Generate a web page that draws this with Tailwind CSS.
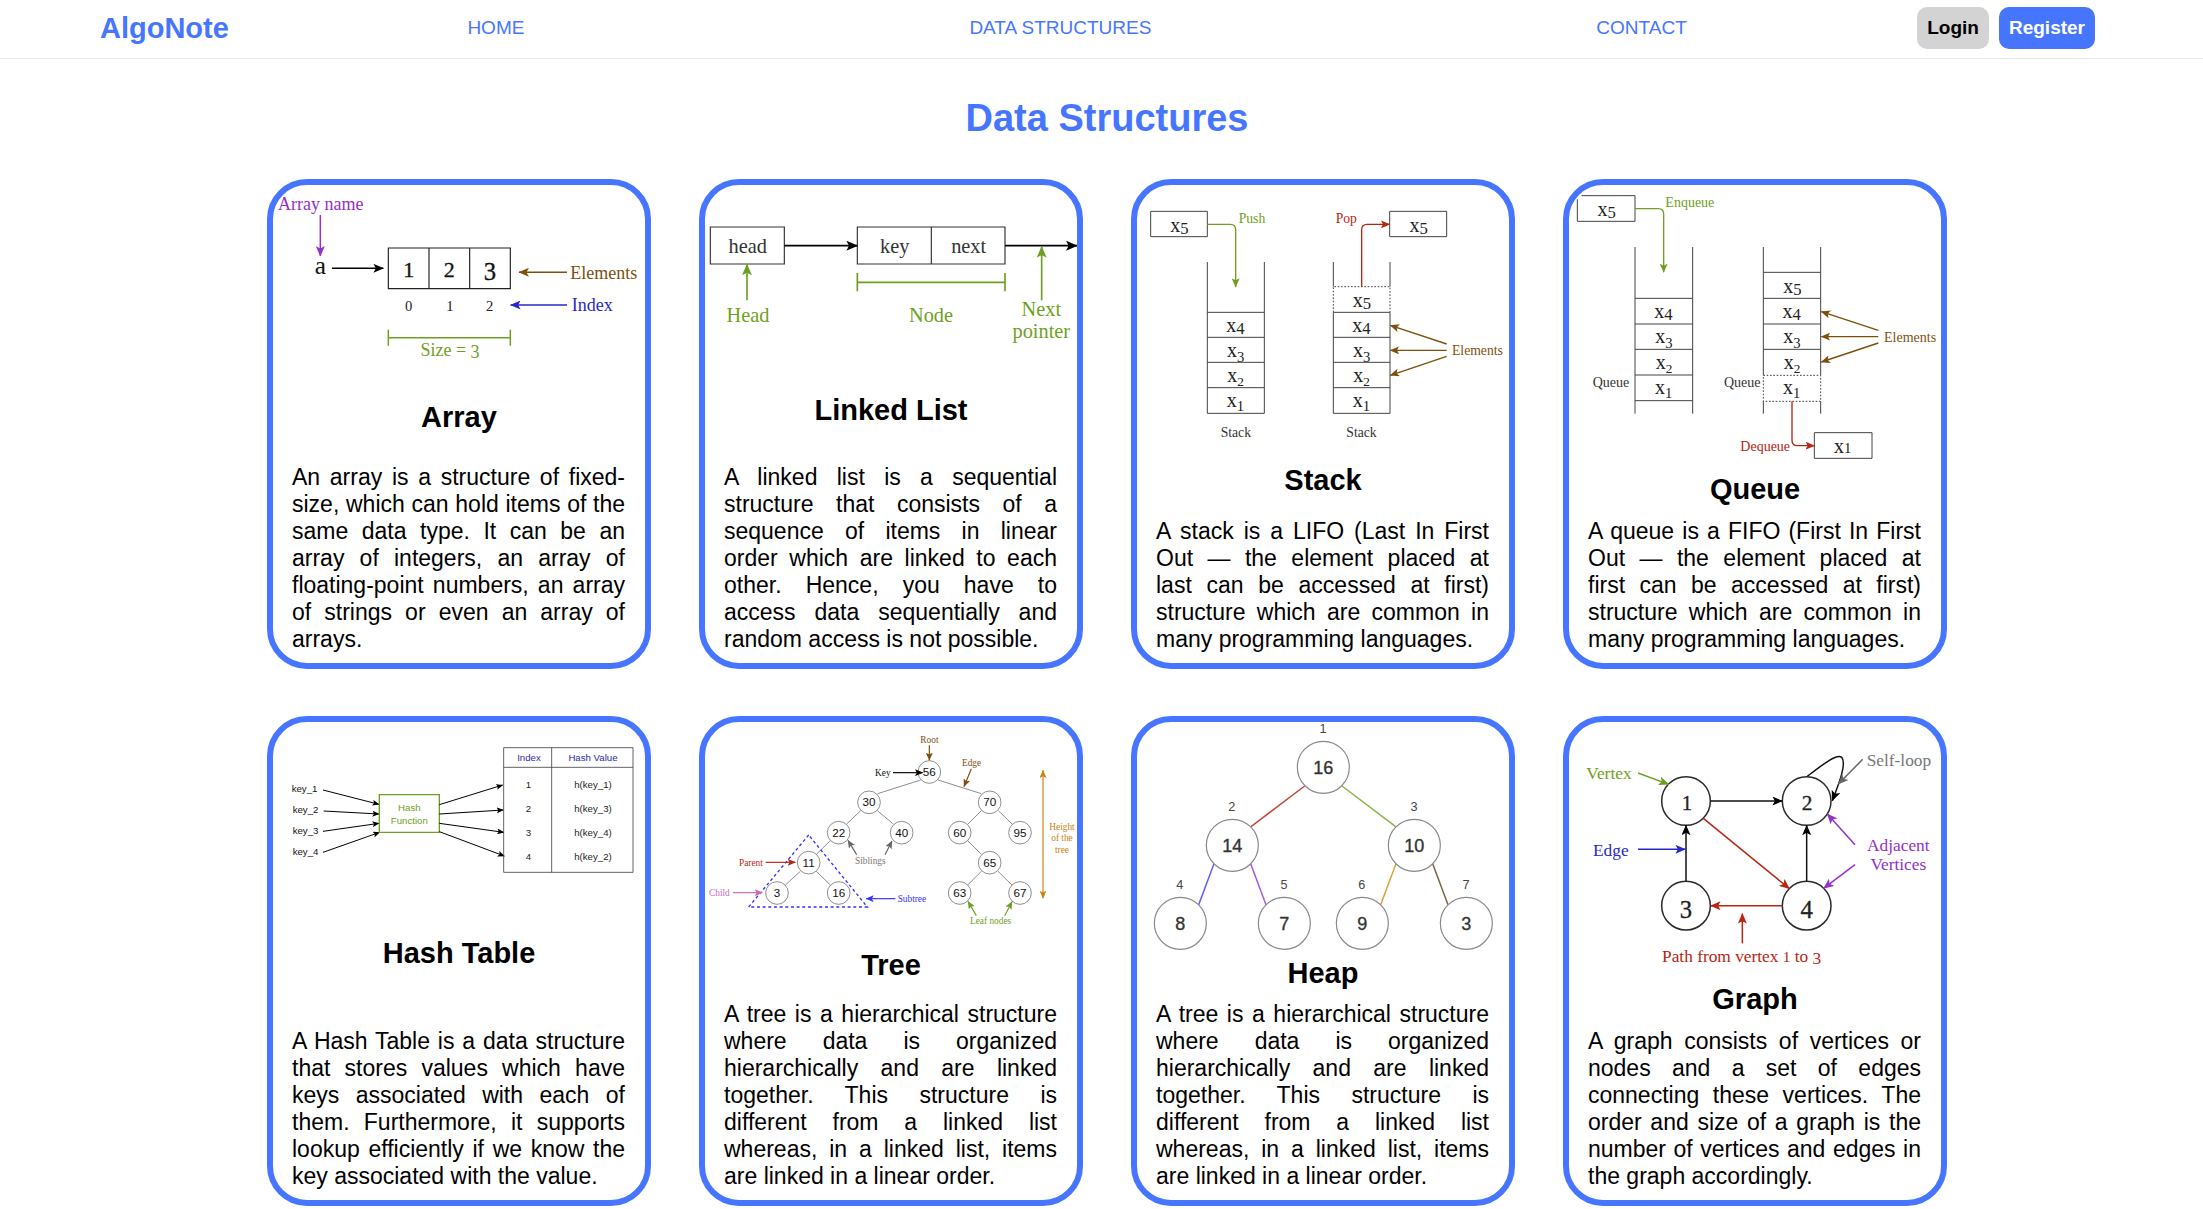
<!DOCTYPE html>
<html lang="en">
<head>
<meta charset="utf-8">
<meta name="viewport" content="width=device-width, initial-scale=1">
<title>AlgoNote - Data Structures</title>
<script src="https://cdn.jsdelivr.net/npm/@tailwindcss/browser@4"></script>
</head>
<body class="bg-white text-black font-['Liberation_Sans',Arial,sans-serif]">

<!-- Arrow heads shared by all diagrams -->
<svg class="absolute size-0" aria-hidden="true">
  <defs>
    <marker id="black" viewBox="0 0 7 6" refX="6.6" refY="3" markerWidth="7" markerHeight="6" orient="auto-start-reverse"><path d="M0 0L7 3L0 6L1.6 3z" fill="#000"/></marker>
    <marker id="purple" viewBox="0 0 7 6" refX="6.6" refY="3" markerWidth="7" markerHeight="6" orient="auto-start-reverse"><path d="M0 0L7 3L0 6L1.6 3z" fill="#9430cc"/></marker>
    <marker id="brown" viewBox="0 0 7 6" refX="6.6" refY="3" markerWidth="7" markerHeight="6" orient="auto-start-reverse"><path d="M0 0L7 3L0 6L1.6 3z" fill="#7d500c"/></marker>
    <marker id="blue" viewBox="0 0 7 6" refX="6.6" refY="3" markerWidth="7" markerHeight="6" orient="auto-start-reverse"><path d="M0 0L7 3L0 6L1.6 3z" fill="#2828cc"/></marker>
    <marker id="brightblue" viewBox="0 0 7 6" refX="6.6" refY="3" markerWidth="7" markerHeight="6" orient="auto-start-reverse"><path d="M0 0L7 3L0 6L1.6 3z" fill="#3333ff"/></marker>
    <marker id="green" viewBox="0 0 7 6" refX="6.6" refY="3" markerWidth="7" markerHeight="6" orient="auto-start-reverse"><path d="M0 0L7 3L0 6L1.6 3z" fill="#6f9f22"/></marker>
    <marker id="red" viewBox="0 0 7 6" refX="6.6" refY="3" markerWidth="7" markerHeight="6" orient="auto-start-reverse"><path d="M0 0L7 3L0 6L1.6 3z" fill="#b82510"/></marker>
    <marker id="gray" viewBox="0 0 7 6" refX="6.6" refY="3" markerWidth="7" markerHeight="6" orient="auto-start-reverse"><path d="M0 0L7 3L0 6L1.6 3z" fill="#666"/></marker>
    <marker id="pink" viewBox="0 0 7 6" refX="6.6" refY="3" markerWidth="7" markerHeight="6" orient="auto-start-reverse"><path d="M0 0L7 3L0 6L1.6 3z" fill="#c868b8"/></marker>
    <marker id="orange" viewBox="0 0 7 6" refX="6.6" refY="3" markerWidth="7" markerHeight="6" orient="auto-start-reverse"><path d="M0 0L7 3L0 6L1.6 3z" fill="#c8820f"/></marker>
  </defs>
</svg>

<header class="flex items-center border-b border-[#e5e5e5] pt-[7px] pb-[9px] pl-[100px] pr-[108px]">
  <a href="#" class="text-[29px] leading-[33px] font-bold text-[#4676ff]">AlgoNote</a>
  <nav class="ml-4 mr-2 flex flex-1 justify-around text-[19px] leading-[22px] text-[#4676ff]">
    <a href="#">HOME</a>
    <a href="#">DATA STRUCTURES</a>
    <a href="#">CONTACT</a>
  </nav>
  <div class="flex gap-[10px] text-[19px] leading-[22px] font-bold">
    <button type="button" class="rounded-[10px] bg-[#d3d3d3] p-[10px]">Login</button>
    <button type="button" class="rounded-[10px] bg-[#4676ff] p-[10px] text-white">Register</button>
  </div>
</header>

<main class="pt-[38px] pb-[3px] pl-[11px]">
  <h1 class="mb-[39px] text-center text-[38px] leading-[43px] font-bold text-[#4676ff]">Data Structures</h1>

  <div class="mx-auto grid w-full max-w-[1680px] grid-cols-4 gap-x-12 gap-y-[47px]">

    <!-- Array -->
    <article class="flex min-h-[490px] flex-col justify-between overflow-hidden rounded-[40px] border-6 border-[#4676ff] pb-[10px]">
      <svg class="w-full" viewBox="39 45 1116 555" role="img" aria-label="Array diagram" fill="none" stroke-width="4.5" font-family="Georgia, 'Liberation Serif', serif" font-size="54">
        <text x="54" y="119" fill="#9430cc">Array name</text>
        <path d="M181 135V258" stroke="#9430cc" marker-end="url(#purple)"/>
        <text x="181" y="311" fill="#111" font-size="76" text-anchor="middle">a</text>
        <path d="M216 295H370" stroke="#000" marker-end="url(#black)"/>
        <path d="M385 234H751V356H385zM507 234V356M629 234V356" stroke="#222" stroke-width="3.5"/>
        <g fill="#111" text-anchor="middle" stroke="#111" stroke-width="1">
          <text x="446" y="320" font-size="66">1</text><text x="568" y="320" font-size="66">2</text><text x="690" y="331" font-size="74">3</text>
        </g>
        <g fill="#222" text-anchor="middle" font-size="44">
          <text x="446" y="424">0</text><text x="570" y="424">1</text><text x="689" y="424">2</text>
        </g>
        <text x="931" y="326" fill="#7d500c">Elements</text>
        <path d="M921 307H777" stroke="#7d500c" marker-end="url(#brown)"/>
        <text x="935" y="424" fill="#2828cc">Index</text>
        <path d="M921 405H752" stroke="#2828cc" marker-end="url(#blue)"/>
        <path d="M385 503H751M385 479V527M751 479V527" stroke="#6f9f22"/>
        <text x="570" y="558" fill="#6f9f22" text-anchor="middle">Size = <tspan dy="6">3</tspan></text>
      </svg>
      <h2 class="text-center text-[29px] leading-[33px] font-bold">Array</h2>
      <p class="pl-[19px] pr-5 text-justify text-[23px] leading-[27px]">An array is a structure of fixed-size, which can hold items of the same data type. It can be an array of integers, an array of floating-point numbers, an array of strings or even an array of arrays.</p>
    </article>

    <!-- Linked list -->
    <article class="flex min-h-[490px] flex-col justify-between overflow-hidden rounded-[40px] border-6 border-[#4676ff] pb-[10px]">
      <svg class="w-full" viewBox="45 45 1116 513" role="img" aria-label="Linked list diagram" fill="none" stroke-width="5" font-family="Georgia, 'Liberation Serif', serif" font-size="61" text-anchor="middle">
        <path d="M61 171H283V282H61zM502 171H945V282H502zM724 171V282" stroke="#333" stroke-width="3.5"/>
        <g fill="#333"><text x="173" y="248">head</text><text x="614" y="248">key</text><text x="836" y="248">next</text></g>
        <path d="M283 227H502" stroke="#000" marker-end="url(#black)"/>
        <path d="M945 227H1161" stroke="#000" marker-end="url(#black)"/>
        <path d="M171 391V283" stroke="#6f9f22" marker-end="url(#green)"/>
        <path d="M1055 391V230" stroke="#6f9f22" marker-end="url(#green)"/>
        <path d="M502 337H945M502 309V364M945 309V364" stroke="#6f9f22"/>
        <g fill="#6f9f22"><text x="174" y="456">Head</text><text x="723" y="456">Node</text><text x="1054" y="438">Next</text><text x="1054" y="504">pointer</text></g>
      </svg>
      <h2 class="text-center text-[29px] leading-[33px] font-bold">Linked List</h2>
      <p class="pl-[19px] pr-5 text-justify text-[23px] leading-[27px]">A linked list is a sequential structure that consists of a sequence of items in linear order which are linked to each other. Hence, you have to access data sequentially and random access is not possible.</p>
    </article>

    <!-- Stack -->
    <article class="flex min-h-[490px] flex-col justify-between overflow-hidden rounded-[40px] border-6 border-[#4676ff] pb-[10px]">
      <svg class="w-full" viewBox="36 45 1116 774" role="img" aria-label="Stack push and pop diagram" fill="none" stroke-width="4" font-family="Georgia, 'Liberation Serif', serif" font-size="41">
        <g stroke="#444" stroke-width="3">
          <path d="M77 124H247V200H77zM794 124H965V200H794z"/>
          <path d="M247 276V730H418V276M247 427H418M247 502H418M247 577H418M247 653H418"/>
          <path d="M625 276V350M795 276V350M625 427V730H795V427M625 502H795M625 577H795M625 653H795M625 427H795"/>
          <path d="M625 427V350H795V427" stroke-dasharray="5 5"/>
        </g>
        <g fill="#222" font-size="60" text-anchor="middle">
          <text x="163" y="185">x<tspan font-size="50" dy="7">5</tspan></text>
          <text x="881" y="185">x<tspan font-size="50" dy="7">5</tspan></text>
          <text x="331" y="486">x<tspan font-size="50" dy="6">4</tspan></text>
          <text x="332" y="561">x<tspan font-size="44" dy="15">3</tspan></text>
          <text x="332" y="636">x<tspan font-size="40" dy="11">2</tspan></text>
          <text x="331" y="711">x<tspan font-size="44" dy="11">1</tspan></text>
          <text x="711" y="410">x<tspan font-size="50" dy="6">5</tspan></text>
          <text x="709" y="486">x<tspan font-size="50" dy="6">4</tspan></text>
          <text x="710" y="561">x<tspan font-size="44" dy="15">3</tspan></text>
          <text x="710" y="636">x<tspan font-size="40" dy="11">2</tspan></text>
          <text x="709" y="711">x<tspan font-size="44" dy="11">1</tspan></text>
        </g>
        <path d="M247 163H316Q332 163 332 179V351" stroke="#6f9f22" marker-end="url(#green)"/>
        <text x="341" y="158" fill="#6f9f22">Push</text>
        <path d="M710 350V179Q710 163 726 163H794" stroke="#b82510" marker-end="url(#red)"/>
        <text x="632" y="158" fill="#b82510">Pop</text>
        <path d="M965 522L796 466" stroke="#7d500c" marker-end="url(#brown)"/>
        <path d="M965 541H796" stroke="#7d500c" marker-end="url(#brown)"/>
        <path d="M965 559L796 616" stroke="#7d500c" marker-end="url(#brown)"/>
        <text x="981" y="556" fill="#7d500c">Elements</text>
        <g fill="#333"><text x="287" y="802">Stack</text><text x="664" y="802">Stack</text></g>
      </svg>
      <h2 class="text-center text-[29px] leading-[33px] font-bold">Stack</h2>
      <p class="pl-[19px] pr-5 text-justify text-[23px] leading-[27px]">A stack is a LIFO (Last In First Out — the element placed at last can be accessed at first) structure which are common in many programming languages.</p>
    </article>

    <!-- Queue -->
    <article class="flex min-h-[490px] flex-col justify-between overflow-hidden rounded-[40px] border-6 border-[#4676ff] pb-[10px]">
      <svg class="w-full" viewBox="42 45 1116 828" role="img" aria-label="Queue enqueue and dequeue diagram" fill="none" stroke-width="4" font-family="Georgia, 'Liberation Serif', serif" font-size="42">
        <g stroke="#444" stroke-width="3">
          <path d="M80 77H240V154H67V88M778 788H951V865H778z"/>
          <path d="M240 231V731M413 231V731M240 385H413M240 462H413M240 538H413M240 615H413M240 692H413"/>
          <path d="M625 231V616M797 231V616M625 694V731M797 694V731M625 307H797M625 385H797M625 462H797M625 538H797"/>
          <path d="M625 616H797V694H625z" stroke-dasharray="5 5"/>
        </g>
        <g fill="#222" font-size="60" text-anchor="middle">
          <text x="155" y="137">x<tspan font-size="50" dy="7">5</tspan></text>
          <text x="325" y="444">x<tspan font-size="50" dy="7">4</tspan></text>
          <text x="327" y="520">x<tspan font-size="44" dy="15">3</tspan></text>
          <text x="327" y="597">x<tspan font-size="40" dy="11">2</tspan></text>
          <text x="326" y="671">x<tspan font-size="44" dy="12">1</tspan></text>
          <text x="712" y="368">x<tspan font-size="50" dy="7">5</tspan></text>
          <text x="710" y="444">x<tspan font-size="50" dy="7">4</tspan></text>
          <text x="711" y="520">x<tspan font-size="44" dy="15">3</tspan></text>
          <text x="711" y="597">x<tspan font-size="40" dy="11">2</tspan></text>
          <text x="710" y="673">x<tspan font-size="44" dy="12">1</tspan></text>
          <text x="863" y="848">x<tspan font-size="44">1</tspan></text>
        </g>
        <path d="M240 116H310Q326 116 326 132V307" stroke="#6f9f22" marker-end="url(#green)"/>
        <text x="331" y="112" fill="#6f9f22">Enqueue</text>
        <path d="M711 694V811Q711 827 727 827H778" stroke="#b82510" marker-end="url(#red)"/>
        <text x="556" y="842" fill="#b82510">Dequeue</text>
        <path d="M970 481L799 425" stroke="#7d500c" marker-end="url(#brown)"/>
        <path d="M970 500H799" stroke="#7d500c" marker-end="url(#brown)"/>
        <path d="M970 519L799 576" stroke="#7d500c" marker-end="url(#brown)"/>
        <text x="987" y="515" fill="#7d500c">Elements</text>
        <g fill="#333"><text x="113" y="652">Queue</text><text x="507" y="652">Queue</text></g>
      </svg>
      <h2 class="text-center text-[29px] leading-[33px] font-bold">Queue</h2>
      <p class="pl-[19px] pr-5 text-justify text-[23px] leading-[27px]">A queue is a FIFO (First In First Out — the element placed at first can be accessed at first) structure which are common in many programming languages.</p>
    </article>

    <!-- Hash table -->
    <article class="flex min-h-[490px] flex-col justify-between overflow-hidden rounded-[40px] border-6 border-[#4676ff] pb-[10px]">
      <svg class="w-full" viewBox="39 36 1116 468" role="img" aria-label="Hash table diagram" fill="none" stroke="#000" stroke-width="3" font-family="'Liberation Sans', Arial, sans-serif" font-size="29">
        <g fill="#111" stroke="none">
          <text x="95" y="246">key_1</text><text x="98" y="310">key_2</text><text x="98" y="372">key_3</text><text x="98" y="435">key_4</text>
        </g>
        <path d="M189 240L357 283" marker-end="url(#black)"/>
        <path d="M191 303L357 312" marker-end="url(#black)"/>
        <path d="M189 364L357 340" marker-end="url(#black)"/>
        <path d="M189 427L359 367" marker-end="url(#black)"/>
        <path d="M358 254H538V367H358z" stroke="#6f9f22" stroke-width="4"/>
        <g fill="#6f9f22" stroke="none" text-anchor="middle"><text x="448" y="304">Hash</text><text x="448" y="341">Function</text></g>
        <path d="M538 284L728 225" marker-end="url(#black)"/>
        <path d="M538 312L730 300" marker-end="url(#black)"/>
        <path d="M538 340L731 367" marker-end="url(#black)"/>
        <path d="M538 365L733 438" marker-end="url(#black)"/>
        <path d="M731 113H1119V487H731zM731 172H1119M875 113V487" stroke="#444" stroke-width="2.5"/>
        <g fill="#2a2aa8" stroke="none" text-anchor="middle"><text x="807" y="154">Index</text><text x="999" y="154">Hash Value</text></g>
        <g fill="#222" stroke="none" text-anchor="middle">
          <text x="805" y="233">1</text><text x="805" y="305">2</text><text x="805" y="377">3</text><text x="805" y="449">4</text>
          <text x="999" y="233">h(key_1)</text><text x="999" y="305">h(key_3)</text><text x="999" y="377">h(key_4)</text><text x="999" y="449">h(key_2)</text>
        </g>
      </svg>
      <h2 class="text-center text-[29px] leading-[33px] font-bold">Hash Table</h2>
      <p class="pl-[19px] pr-5 text-justify text-[23px] leading-[27px]">A Hash Table is a data structure that stores values which have keys associated with each of them. Furthermore, it supports lookup efficiently if we know the key associated with the value.</p>
    </article>

    <!-- Tree -->
    <article class="flex min-h-[490px] flex-col justify-between overflow-hidden rounded-[40px] border-6 border-[#4676ff] pb-[10px]">
      <svg class="w-full" viewBox="45 36 1116 621" role="img" aria-label="Tree diagram" fill="none" stroke-width="3.5" font-family="'Liberation Serif', 'Times New Roman', serif" font-size="28">
        <g stroke="#555" stroke-width="2">
          <path d="M692 210L563 251M744 210L874 251M512 302L470 342M562 302L610 342M874 302L834 342M925 302L966 342M421 392L379 433M833 392L874 433M331 484L286 525M379 484L421 525M874 484L833 525M924 484L966 525"/>
          <circle cx="718" cy="186" r="34"/><circle cx="537" cy="277" r="34"/><circle cx="899" cy="277" r="34"/>
          <circle cx="446" cy="368" r="34"/><circle cx="635" cy="368" r="34"/><circle cx="809" cy="368" r="34"/><circle cx="990" cy="368" r="34"/>
          <circle cx="356" cy="458" r="34"/><circle cx="899" cy="458" r="34"/>
          <circle cx="261" cy="549" r="34"/><circle cx="446" cy="549" r="34"/><circle cx="809" cy="549" r="34"/><circle cx="990" cy="549" r="34"/>
        </g>
        <g fill="#111" font-family="'Liberation Sans', Arial, sans-serif" font-size="35" text-anchor="middle">
          <text x="718" y="198">56</text><text x="537" y="289">30</text><text x="899" y="289">70</text>
          <text x="446" y="380">22</text><text x="635" y="380">40</text><text x="809" y="380">60</text><text x="990" y="380">95</text>
          <text x="356" y="470">11</text><text x="899" y="470">65</text>
          <text x="261" y="561">3</text><text x="446" y="561">16</text><text x="809" y="561">63</text><text x="990" y="561">67</text>
        </g>
        <path d="M356 375L176 591H532z" stroke="#3333ff" stroke-width="4" stroke-dasharray="9 8"/>
        <path d="M609 188H698" stroke="#000" marker-end="url(#black)"/><text x="555" y="199" fill="#111">Key</text>
        <path d="M718 106V151" stroke="#7d500c" marker-end="url(#brown)"/><text x="691" y="99" fill="#7d500c">Root</text>
        <path d="M844 176L822 230" stroke="#7d500c" marker-end="url(#brown)"/><text x="816" y="167" fill="#7d500c">Edge</text>
        <path d="M227 457H316" stroke="#b82510" marker-end="url(#red)"/><text x="147" y="468" fill="#b82510">Parent</text>
        <path d="M129 548H217" stroke="#c868b8" marker-end="url(#pink)"/><text x="57" y="558" fill="#c868b8">Child</text>
        <path d="M616 566H528" stroke="#3333ff" marker-end="url(#brightblue)"/><text x="623" y="575" fill="#3333ff">Subtree</text>
        <path d="M500 434L474 391" stroke="#666" marker-end="url(#gray)"/><path d="M585 434L606 393" stroke="#666" marker-end="url(#gray)"/><text x="495" y="461" fill="#777">Siblings</text>
        <path d="M859 617L834 574" stroke="#6f9f22" marker-end="url(#green)"/><path d="M944 617L966 575" stroke="#6f9f22" marker-end="url(#green)"/><text x="840" y="643" fill="#6f9f22">Leaf nodes</text>
        <path d="M1059 181V565" stroke="#c8820f" marker-start="url(#orange)" marker-end="url(#orange)"/>
        <g fill="#c8820f" text-anchor="middle"><text x="1116" y="360">Height</text><text x="1116" y="394">of the</text><text x="1116" y="428">tree</text></g>
      </svg>
      <h2 class="text-center text-[29px] leading-[33px] font-bold">Tree</h2>
      <p class="pl-[19px] pr-5 text-justify text-[23px] leading-[27px]">A tree is a hierarchical structure where data is organized hierarchically and are linked together. This structure is different from a linked list whereas, in a linked list, items are linked in a linear order.</p>
    </article>

    <!-- Heap -->
    <article class="flex min-h-[490px] flex-col justify-between overflow-hidden rounded-[40px] border-6 border-[#4676ff] pb-[10px]">
      <svg class="w-full" viewBox="36 36 1116 669" overflow="visible" role="img" aria-label="Heap diagram" fill="none" stroke-width="4.5" font-family="'Liberation Sans', Arial, sans-serif" font-size="54" text-anchor="middle">
        <path d="M539 228L378 350" stroke="#c2473c"/><path d="M651 228L812 350" stroke="#8ab548"/>
        <path d="M267 461L221 584" stroke="#5c5cff"/><path d="M377 461L423 584" stroke="#a55be0"/>
        <path d="M813 461L767 584" stroke="#dba038"/><path d="M923 461L969 584" stroke="#7d6540"/>
        <g stroke="#888" stroke-width="3.5">
          <circle cx="595" cy="172" r="78"/><circle cx="322" cy="406" r="78"/><circle cx="868" cy="406" r="78"/>
          <circle cx="166" cy="640" r="78"/><circle cx="478" cy="640" r="78"/><circle cx="712" cy="640" r="78"/><circle cx="1024" cy="640" r="78"/>
        </g>
        <g fill="#333" stroke="#333" stroke-width="1">
          <text x="595" y="192">16</text><text x="322" y="426">14</text><text x="868" y="426">10</text>
          <text x="166" y="660">8</text><text x="478" y="660">7</text><text x="712" y="660">9</text><text x="1024" y="660">3</text>
        </g>
        <g fill="#444" font-size="38">
          <text x="594" y="69">1</text><text x="320" y="303">2</text><text x="867" y="303">3</text>
          <text x="164" y="537">4</text><text x="477" y="537">5</text><text x="710" y="537">6</text><text x="1023" y="537">7</text>
        </g>
      </svg>
      <h2 class="text-center text-[29px] leading-[33px] font-bold">Heap</h2>
      <p class="pl-[19px] pr-5 text-justify text-[23px] leading-[27px]">A tree is a hierarchical structure where data is organized hierarchically and are linked together. This structure is different from a linked list whereas, in a linked list, items are linked in a linear order.</p>
    </article>

    <!-- Graph -->
    <article class="flex min-h-[490px] flex-col justify-between overflow-hidden rounded-[40px] border-6 border-[#4676ff] pb-[10px]">
      <svg class="w-full" viewBox="42 36 1116 747" role="img" aria-label="Graph diagram" fill="none" stroke-width="4.5" font-family="Georgia, 'Liberation Serif', serif" font-size="52">
        <g stroke="#2a2a2a"><circle cx="393" cy="273" r="73"/><circle cx="755" cy="273" r="73"/><circle cx="393" cy="587" r="73"/><circle cx="755" cy="587" r="73"/></g>
        <g fill="#222" stroke="#222" stroke-width="1" text-anchor="middle">
          <text x="396" y="299" font-size="62">1</text><text x="756" y="299" font-size="64">2</text><text x="393" y="624" font-size="74">3</text><text x="755" y="624" font-size="74">4</text>
        </g>
        <g stroke="#111">
          <path d="M466 273H682" marker-end="url(#black)"/>
          <path d="M393 514V346" marker-end="url(#black)"/>
          <path d="M755 514V346" marker-end="url(#black)"/>
          <path d="M757 199C800 166 845 130 860 142C876 160 852 220 832 272" marker-end="url(#black)"/>
        </g>
        <g stroke="#b82510">
          <path d="M445 325L703 536" marker-end="url(#red)"/>
          <path d="M682 587H467" marker-end="url(#red)"/>
          <path d="M562 700V611" marker-end="url(#red)"/>
        </g>
        <text x="321" y="757" fill="#b82510">Path from vertex <tspan font-size="46">1</tspan> to <tspan dy="6">3</tspan></text>
        <path d="M249 189L341 223" stroke="#6f9f22" marker-end="url(#green)"/>
        <text x="94" y="208" fill="#6f9f22">Vertex</text>
        <path d="M249 418H391" stroke="#2828cc" marker-end="url(#blue)"/>
        <text x="114" y="437" fill="#2828cc">Edge</text>
        <path d="M923 148L850 222" stroke="#666" marker-end="url(#gray)"/>
        <text x="935" y="168" fill="#777">Self-loop</text>
        <path d="M900 404L817 312" stroke="#9430cc" marker-end="url(#purple)"/>
        <path d="M900 464L806 535" stroke="#9430cc" marker-end="url(#purple)"/>
        <g fill="#9430cc" text-anchor="middle"><text x="1030" y="424">Adjacent</text><text x="1030" y="481">Vertices</text></g>
      </svg>
      <h2 class="text-center text-[29px] leading-[33px] font-bold">Graph</h2>
      <p class="pl-[19px] pr-5 text-justify text-[23px] leading-[27px]">A graph consists of vertices or nodes and a set of edges connecting these vertices. The order and size of a graph is the number of vertices and edges in the graph accordingly.</p>
    </article>

  </div>
</main>
</body>
</html>
